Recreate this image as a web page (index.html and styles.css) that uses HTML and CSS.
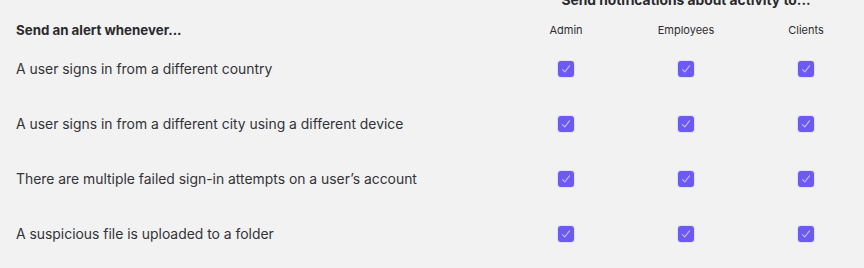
FILE: index.html
```html
<!DOCTYPE html>
<html>
<head>
<meta charset="utf-8">
<link rel="stylesheet" href="styles.css">
</head>
<body>
<div class="panel">
  <div class="grid">
    <div class="spacer"></div>
    <div class="group-title">Send notifications about activity to...</div>

    <div class="head-label">Send an alert whenever...</div>
    <div class="col-label">Admin</div>
    <div class="col-label">Employees</div>
    <div class="col-label">Clients</div>

    <div class="row-label">A user signs in from a different country</div>
    <div class="cell"><span class="check"><svg viewBox="0 0 16 16"><path d="M4.5 8.6 L6.8 10.9 L11.5 4.8"/></svg></span></div>
    <div class="cell"><span class="check"><svg viewBox="0 0 16 16"><path d="M4.5 8.6 L6.8 10.9 L11.5 4.8"/></svg></span></div>
    <div class="cell"><span class="check"><svg viewBox="0 0 16 16"><path d="M4.5 8.6 L6.8 10.9 L11.5 4.8"/></svg></span></div>

    <div class="row-label">A user signs in from a different city using a different device</div>
    <div class="cell"><span class="check"><svg viewBox="0 0 16 16"><path d="M4.5 8.6 L6.8 10.9 L11.5 4.8"/></svg></span></div>
    <div class="cell"><span class="check"><svg viewBox="0 0 16 16"><path d="M4.5 8.6 L6.8 10.9 L11.5 4.8"/></svg></span></div>
    <div class="cell"><span class="check"><svg viewBox="0 0 16 16"><path d="M4.5 8.6 L6.8 10.9 L11.5 4.8"/></svg></span></div>

    <div class="row-label">There are multiple failed sign-in attempts on a user’s account</div>
    <div class="cell"><span class="check"><svg viewBox="0 0 16 16"><path d="M4.5 8.6 L6.8 10.9 L11.5 4.8"/></svg></span></div>
    <div class="cell"><span class="check"><svg viewBox="0 0 16 16"><path d="M4.5 8.6 L6.8 10.9 L11.5 4.8"/></svg></span></div>
    <div class="cell"><span class="check"><svg viewBox="0 0 16 16"><path d="M4.5 8.6 L6.8 10.9 L11.5 4.8"/></svg></span></div>

    <div class="row-label">A suspicious file is uploaded to a folder</div>
    <div class="cell"><span class="check"><svg viewBox="0 0 16 16"><path d="M4.5 8.6 L6.8 10.9 L11.5 4.8"/></svg></span></div>
    <div class="cell"><span class="check"><svg viewBox="0 0 16 16"><path d="M4.5 8.6 L6.8 10.9 L11.5 4.8"/></svg></span></div>
    <div class="cell"><span class="check"><svg viewBox="0 0 16 16"><path d="M4.5 8.6 L6.8 10.9 L11.5 4.8"/></svg></span></div>
  </div>
</div>
</body>
</html>
```
FILE: styles.css
```css
html, body {
  margin: 0;
  padding: 0;
  background: #f2f2f2;
  overflow: hidden;
}
body {
  font-family: Inter, "Noto Sans", sans-serif;
  color: #2a2a2e;
  width: 864px;
  height: 268px;
}
.panel {
  padding-left: 16px;
  margin-top: -8px;
}
.grid {
  display: grid;
  grid-template-columns: 490px 120px 120px 120px;
  grid-template-rows: 27px 22px 55px 55px 55px 55px;
}
.group-title {
  grid-column: 2 / 5;
  text-align: center;
  font-size: 13.8px;
  font-weight: 700;
  line-height: 16px;
  white-space: nowrap;
}
.head-label {
  font-size: 13.3px;
  font-weight: 700;
  line-height: 22px;
}
.col-label {
  font-size: 11px;
  line-height: 22px;
  text-align: center;
  color: #2e2e33;
}
.row-label {
  font-size: 13.9px;
  display: flex;
  align-items: center;
  color: #333338;
}
.cell {
  display: flex;
  align-items: center;
  justify-content: center;
}
.check {
  width: 16px;
  height: 16px;
  border-radius: 3px;
  background: #6b5bf4;
  box-shadow: 0 0 0 1px #e2defa;
  display: block;
}
.check svg {
  width: 16px;
  height: 16px;
  display: block;
}
.check path {
  fill: none;
  stroke: #c4bcff;
  stroke-width: 1.1;
  stroke-linecap: round;
  stroke-linejoin: round;
}
```
